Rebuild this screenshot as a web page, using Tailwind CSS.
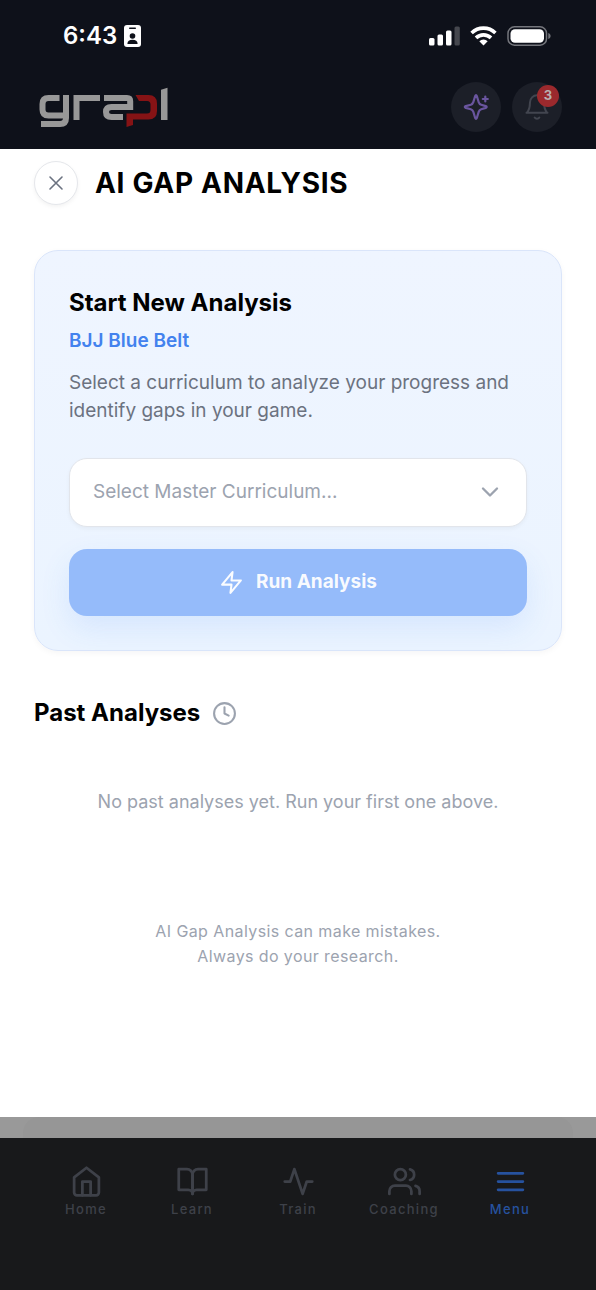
<!DOCTYPE html>
<html lang="en">
<head>
<meta charset="utf-8">
<meta name="viewport" content="width=device-width, initial-scale=1">
<title>AI Gap Analysis</title>
<script src="https://cdn.jsdelivr.net/npm/@tailwindcss/browser@4"></script>
</head>
<body class="flex min-h-screen flex-col bg-white font-['Inter','Liberation_Sans',sans-serif] antialiased">

<header class="bg-[#0e111a] pb-[17px]">
  <!-- Status bar -->
  <div class="flex h-[72px] items-center justify-between pr-[45px] pl-[63px]">
    <div class="flex items-center gap-[7px] text-white">
      <span class="text-2xl font-semibold">6:43</span>
      <svg class="h-[22px] w-[17px]" viewBox="0 0 17 22" aria-hidden="true">
        <rect width="17" height="22" rx="3" fill="#fff"/>
        <rect x="5" y="2.5" width="7" height="1.5" rx=".7" fill="#0e111a"/>
        <circle cx="8.5" cy="11" r="2.8" fill="#0e111a"/>
        <path d="M3.4 19c0-3 2-4.300 5.100-4.300s5.100 1.300 5.100 4.300z" fill="#0e111a"/>
      </svg>
    </div>
    <div class="flex items-center gap-[10px]">
      <svg class="h-5 w-[31px]" viewBox="0 0 31 20" fill="#fff" aria-hidden="true">
        <rect x="0" y="12" width="5.500" height="7.500" rx="1.500"/>
        <rect x="8.500" y="8.500" width="5.500" height="11" rx="1.500"/>
        <rect x="17" y="4.500" width="5.500" height="15" rx="1.500"/>
        <rect x="25.500" y="0.500" width="5.300" height="19" rx="1.500" fill="#45474e"/>
      </svg>
      <svg class="h-5 w-[27px]" viewBox="0 0 27 20" aria-hidden="true">
        <g fill="none" stroke="#fff" stroke-width="3.600">
          <path d="M1.600 7a17 17 0 0 1 23.800 0"/>
          <path d="M6 11.900a10.700 10.700 0 0 1 15 0"/>
        </g>
        <path d="M9.300 15.300a6 6 0 0 1 8.400 0l-4.200 4.200z" fill="#fff"/>
      </svg>
      <svg class="h-5 w-11" viewBox="0 0 44 20" aria-hidden="true">
        <rect x="1" y=".8" width="38.500" height="18.400" rx="6.500" fill="none" stroke="#74767c" stroke-width="1.500"/>
        <rect x="3.500" y="3.200" width="33.500" height="13.600" rx="4.500" fill="#fff"/>
        <path d="M41.300 7c3 1 3 5 0 6z" fill="#74767c"/>
      </svg>
    </div>
  </div>

  <!-- Brand bar -->
  <div class="flex h-[60px] items-center justify-between px-[34px] pt-[10px]">
    <svg class="ml-1 h-10 w-[130px] overflow-visible" viewBox="0 0 130 40" role="img" aria-label="grapl" fill="none" stroke="#989898" stroke-width="6">
      <path d="M21.500 11H10.500q-6 0-6 6v5.500q0 6 6 6h16"/>
      <path d="M28 8v23q0 6-6 6H3"/>
      <path d="M38.500 33V8"/>
      <path d="M40 11h22"/>
      <path d="M66 11h23q3.200 0 3.200 3.200v5.800H73.500q-5.500 0-5.500 5v0q0 5 5.500 5h11.500" stroke-width="6"/>
      <path d="M97.500 8h13q8.500 0 8.500 8.500v7.500q0 8.500-8.500 8.500H95v5.500l-6.500 2V26.500h20.500q3.500 0 3.500-3.500v-5.500q0-3.500-3.500-3.500H101z" fill="#861315" stroke="none"/>
      <path d="M123 2.800l6.500-2V33H123z" fill="#989898" stroke="none"/>
    </svg>
    <div class="flex gap-[11px]">
      <button type="button" aria-label="AI assistant" class="flex size-[50px] items-center justify-center rounded-full bg-[#1c1f28]">
        <svg class="size-[30px]" viewBox="0 0 30 30" fill="none" stroke="#6a559f" stroke-width="2.200" stroke-linecap="round" stroke-linejoin="round" aria-hidden="true">
          <path d="M14.100 4.200q.9-2 1.800 0l1.800 6q.6 1.900 2.500 2.500l4.500 1.400q2 .9 0 1.800l-4.500 1.400q-1.900.6-2.500 2.500l-1.800 6q-.9 2-1.800 0l-1.800-6q-.6-1.900-2.500-2.500l-5-1.400q-2-.9 0-1.800l5-1.400q1.900-.6 2.500-2.500z"/>
          <path d="M24.300 4.500v5M21.800 7h5"/>
        </svg>
      </button>
      <button type="button" aria-label="Notifications, 3 unread" class="relative flex size-[50px] items-center justify-center rounded-full bg-[#1c1f28]">
        <svg class="size-7" viewBox="0 0 24 24" fill="none" stroke="#42454f" stroke-width="1.700" stroke-linecap="round" stroke-linejoin="round" aria-hidden="true">
          <path d="M18 8A6 6 0 0 0 6 8c0 7-3 9-3 9h18s-3-2-3-9"/>
          <path d="M14 21c-.8 1.300-3.200 1.300-4 0"/>
        </svg>
        <span class="absolute top-[3px] right-[3px] flex size-[22px] items-center justify-center rounded-full bg-[#9b292d] text-[13px] font-bold text-[#b8b0b2]">3</span>
      </button>
    </div>
  </div>
</header>

<main class="flex-1 px-[34px] pt-3 text-[#9ca3af]">
  <div class="flex items-center gap-[17px]">
    <button type="button" aria-label="Close" class="flex size-11 items-center justify-center rounded-full border border-[#e5e7eb] bg-white shadow-[0_2px_4px_rgba(0,0,0,0.05)]">
      <svg class="size-6" viewBox="0 0 24 24" fill="none" stroke="#6b7280" stroke-width="1.600" stroke-linecap="round" aria-hidden="true"><path d="M6 6l12 12M18 6L6 18"/></svg>
    </button>
    <h1 class="text-[28px] leading-9 font-bold tracking-wide text-black">AI GAP ANALYSIS</h1>
  </div>

  <section class="mt-[45px] rounded-3xl border border-[#dae5fa] bg-linear-to-b from-[#eff5ff] to-[#ebf4ff] p-[34px] shadow-[0_2px_6px_rgba(0,0,0,0.04)]">
    <h2 class="text-2xl leading-9 font-bold text-black">Start New Analysis</h2>
    <p class="mt-[2px] text-[19px] leading-9 font-semibold text-[#4382ee]">BJJ Blue Belt</p>
    <label for="curriculum" class="mt-[10px] block text-[19px] leading-7 text-[#6b7280]">Select a curriculum to analyze your progress and identify gaps in your game.</label>
    <div class="relative mt-[33px]">
      <select id="curriculum" class="block h-[69px] w-full appearance-none rounded-[18px] border border-[#e2e5eb] bg-white px-[23px] text-[19px] text-[#9ca3af] shadow-[0_2px_4px_rgba(0,0,0,0.04)]">
        <option>Select Master Curriculum...</option>
      </select>
      <svg class="pointer-events-none absolute top-5 right-[23px] size-7" viewBox="0 0 24 24" fill="none" stroke="#9ca3af" stroke-width="2" stroke-linecap="round" stroke-linejoin="round" aria-hidden="true"><path d="M6 9l6 6 6-6"/></svg>
    </div>
    <button type="button" class="mt-[22px] flex h-[67px] w-full items-center justify-center gap-3 rounded-[18px] bg-[#95bbfa] text-[19px] font-bold text-white/95 shadow-[0_12px_30px_rgba(59,130,246,0.12)]">
      <svg class="size-[25px]" viewBox="0 0 24 24" fill="none" stroke="currentColor" stroke-width="2" stroke-linecap="round" stroke-linejoin="round" aria-hidden="true"><path d="M13 2L3 14h9l-1 8 10-12h-9z"/></svg>
      Run Analysis
    </button>
  </section>

  <section class="mt-11">
    <div class="flex items-center gap-3">
      <h2 class="text-2xl leading-9 font-bold text-black">Past Analyses</h2>
      <svg class="size-[25px]" viewBox="0 0 24 24" fill="none" stroke="currentColor" stroke-width="2" stroke-linecap="round" stroke-linejoin="round" aria-hidden="true"><circle cx="12" cy="12" r="10"/><path d="M12 6v6l4 2"/></svg>
    </div>
    <p class="mt-[57px] text-center text-lg leading-7">No past analyses yet. Run your first one above.</p>
  </section>

  <p class="mt-[103px] text-center text-base leading-[25px] tracking-wide">AI Gap Analysis can make mistakes.<br>Always do your research.</p>
</main>

<div class="h-[21px] bg-[#999]"><div class="mx-[23px] h-full rounded-t-2xl bg-[#969696]"></div></div>
<nav aria-label="Main" class="grid h-[152px] grid-cols-5 content-start bg-[#18191b] px-[33px] pt-[27px] text-[13px] leading-5 font-medium tracking-widest text-[#3e4149]">
  <a href="#home" class="flex flex-col items-center gap-[1px]">
    <svg class="size-[33px]" viewBox="0 0 24 24" fill="none" stroke="currentColor" stroke-width="2" stroke-linecap="round" stroke-linejoin="round" aria-hidden="true"><path d="M3 9l9-7 9 7v11a2 2 0 0 1-2 2H5a2 2 0 0 1-2-2z"/><path d="M9 22V12h6v10"/></svg>
    Home
  </a>
  <a href="#learn" class="flex flex-col items-center gap-[1px]">
    <svg class="size-[33px]" viewBox="0 0 24 24" fill="none" stroke="currentColor" stroke-width="2" stroke-linecap="round" stroke-linejoin="round" aria-hidden="true"><path d="M2 3h6a4 4 0 0 1 4 4v14a3 3 0 0 0-3-3H2z"/><path d="M22 3h-6a4 4 0 0 0-4 4v14a3 3 0 0 1 3-3h7z"/></svg>
    Learn
  </a>
  <a href="#train" class="flex flex-col items-center gap-[1px]">
    <svg class="size-[33px]" viewBox="0 0 24 24" fill="none" stroke="currentColor" stroke-width="2" stroke-linecap="round" stroke-linejoin="round" aria-hidden="true"><path d="M22 12h-4l-3 9L9 3l-3 9H2"/></svg>
    Train
  </a>
  <a href="#coaching" class="flex flex-col items-center gap-[1px]">
    <svg class="size-[33px]" viewBox="0 0 24 24" fill="none" stroke="currentColor" stroke-width="2" stroke-linecap="round" stroke-linejoin="round" aria-hidden="true"><path d="M17 21v-2a4 4 0 0 0-4-4H5a4 4 0 0 0-4 4v2"/><circle cx="9" cy="7" r="4"/><path d="M23 21v-2a4 4 0 0 0-3-3.870M16 3.130a4 4 0 0 1 0 7.750"/></svg>
    Coaching
  </a>
  <a href="#menu" aria-current="page" class="flex flex-col items-center gap-[1px] text-[#26529f]">
    <svg class="size-[33px]" viewBox="0 0 24 24" fill="none" stroke="currentColor" stroke-width="2" stroke-linecap="round" aria-hidden="true"><path d="M3 12h18M3 6h18M3 18h18"/></svg>
    Menu
  </a>
</nav>
</body>
</html>
